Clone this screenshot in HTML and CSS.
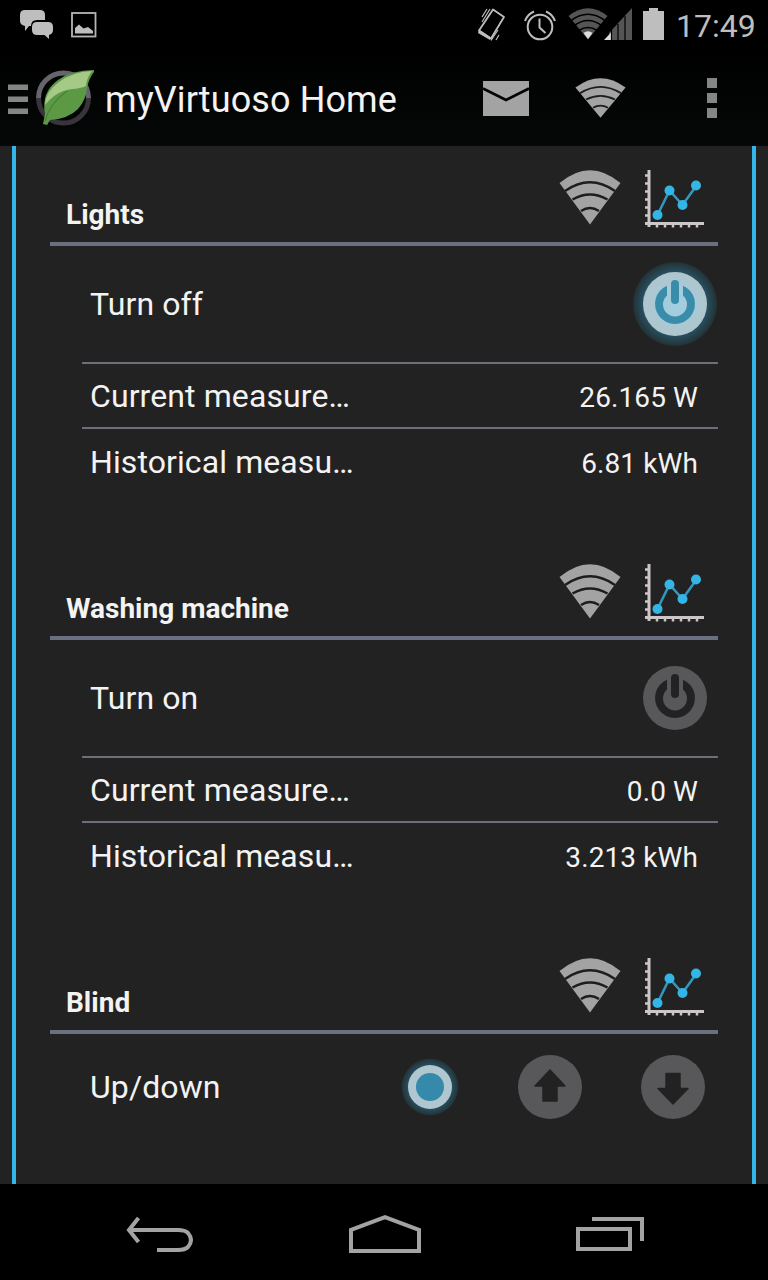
FILE: index.html
```
<!DOCTYPE html>
<html lang="en">
<head>
    <meta charset="UTF-8">
    <meta name="viewport" content="width=device-width, initial-scale=1.0">
    <title>myVirtuoso Home</title>
    <link rel="stylesheet" href="styles.css">
</head>
<body>
    <!-- Shared icons -->
    <svg class="icon-defs" width="0" height="0">
        <defs>
            <radialGradient id="glow">
                <stop offset="0.7" stop-color="#285567"/>
                <stop offset="0.86" stop-color="#25404a"/>
                <stop offset="0.96" stop-color="#233439"/>
                <stop offset="1" stop-color="#222" stop-opacity="0"/>
            </radialGradient>
            <radialGradient id="disk">
                <stop offset="0" stop-color="#9fd0e2"/>
                <stop offset="1" stop-color="#b0c5cd"/>
            </radialGradient>
        </defs>
        <symbol id="wifi" viewBox="0 0 62 55" preserveAspectRatio="none">
            <path d="M0.5 13Q31 -12.5 61.5 13L31 54.5Z" fill="#a3a3a3"/>
            <path d="M6 21Q31 3.5 56 21M13.5 29.5Q31 19.5 48.5 29.5M22 41Q31 35 40 41" fill="none" stroke="#1d1d1d" stroke-width="2.4"/>
        </symbol>
        <symbol id="chart" viewBox="0 0 60 60">
            <path d="M5 0V57M1 53.5H60" fill="none" stroke="#ccc6c8" stroke-width="3"/>
            <path d="M1 5.5H4M1 13.5H4M1 21.5H4M1 29.5H4M1 37.5H4M1 45.5H4M13 54V57.5M21 54V57.5M29 54V57.5M37 54V57.5M45 54V57.5M53 54V57.5" stroke="#ccc6c8" stroke-width="2.5"/>
            <path d="M13.5 45L25.500 20.5L38.5 35L52.5 15.5" fill="none" stroke="#3498bd" stroke-width="2.5"/>
            <g fill="#33b5e5">
                <circle cx="13.5" cy="45" r="5"/>
                <circle cx="25.5" cy="20.5" r="5"/>
                <circle cx="38.5" cy="35" r="5"/>
                <circle cx="52" cy="15.5" r="5"/>
            </g>
        </symbol>
        <symbol id="power" viewBox="0 0 86 86">
            <path d="M35 24.7A20 20 0 1 0 51 24.7V34.5A12 12 0 1 1 35 34.5Z" fill="currentColor"/>
            <path d="M43 23V39" stroke="currentColor" stroke-width="8" stroke-linecap="round"/>
        </symbol>
    </svg>

    <div class="status-bar">
        <div class="status-left">
            <svg width="34" height="31" viewBox="0 0 34 31" fill="#bebebe">
                <path d="M5 1H20Q25 1 25 6V11H17Q11 11 11 17H9L5 22V17Q0 16 0 12V6Q0 1 5 1Z"/>
                <path d="M17 13H28Q33 13 33 18V21Q33 25 29 26V30L24.5 26H17Q12 26 12 21V18Q12 13 17 13Z"/>
            </svg>
            <svg width="26" height="26" viewBox="0 0 26 26">
                <rect x="1" y="1" width="23.5" height="23.5" fill="none" stroke="#b5b5b5" stroke-width="1.8"/>
                <path d="M4 21.5V16L8 12.5L12.5 16.5L17 15L22 19V21.5Z" fill="#bebebe"/>
            </svg>
        </div>
        <div class="status-right">
            <svg class="vibrate" width="30" height="34" viewBox="0 0 30 34" fill="none" stroke="#bebebe">
                <path d="M16 1.5L27 9L14 30.5L2 22.5Z" stroke-width="1.8" stroke-linejoin="round"/>
                <path d="M2 21.5L14 29.5L13 32L1 25Z" fill="#bebebe" stroke="none"/>
                <path d="M5 9L10 1M5 14L13 1M14 32.5L21 22M19 32L22 27" stroke-width="1.2"/>
            </svg>
            <svg class="alarm" width="32" height="32" viewBox="0 0 32 32" fill="none" stroke="#bebebe">
                <circle cx="16" cy="18" r="12.3" stroke-width="2"/>
                <path d="M15.5 9.5V18.5L21.5 24M1 12Q3.5 5 10 2.5M31 12Q28.5 5 22 2.5" stroke-width="2"/>
            </svg>
            <svg class="signals" width="66" height="32" viewBox="0 0 66 32">
                <path d="M0.5 8Q20 -7.5 39.5 8L20 31.5Z" fill="#555"/>
                <path d="M3 12.5Q20 0 37 12.5M7 17Q20 8 33 17M11.5 22Q20 17 28.5 22" fill="none" stroke="#000" stroke-width="1.7"/>
                <path d="M15.5 25Q20 21.5 24.5 25L20 31Z" fill="#ddd"/>
                <path d="M41 32V25L64 0V32Z" fill="#555"/>
                <path d="M36 32L43 24.5V32Z" fill="#ddd"/>
                <path d="M43.5 22V32M50 16V32M57 8V32" stroke="#000" stroke-width="1.2"/>
            </svg>
            <svg class="battery" width="21" height="32" viewBox="0 0 21 32">
                <path d="M6 0H15V3H21V32H0V3H6Z" fill="#bebebe"/>
            </svg>
            <span class="clock">17:49</span>
        </div>
    </div>

    <div class="action-bar">
        <svg class="drawer" width="20" height="31" viewBox="0 0 20 31" fill="#858585">
            <path d="M0 0.5H20V6H0ZM0 12.5H20V18H0ZM0 24.5H20V30H0Z"/>
        </svg>
        <svg class="logo" width="60" height="58" viewBox="0 0 60 58">
            <path d="M3.5 29A25 25 0 0 1 53.5 29" fill="none" stroke="#66656b" stroke-width="5"/>
            <path d="M3.5 29A25 25 0 0 0 53.5 29" fill="none" stroke="#39343b" stroke-width="5"/>
            <path d="M59 1Q37 1 23 11Q6 23 10 45L8 55L12 56L15 51Q33 50 43 40Q51 31 52 19Q54 9 59 3Z" fill="#5c9945"/>
            <path d="M57 2Q37 3 24 13Q10 23 10 36Q22 21 38 20Q47 19 51 17Q52 8 57 2Z" fill="#a5ca88"/>
            <path d="M10 52Q15 34 32 22" fill="none" stroke="#478235" stroke-width="1.2"/>
        </svg>
        <h1 class="title">myVirtuoso Home</h1>
        <svg class="mail" width="46" height="35" viewBox="0 0 46 35">
            <path d="M0 0H46V35H0Z" fill="#a3a3a3"/>
            <path d="M0 7.5L23 19L46 7.5" fill="none" stroke="#020403" stroke-width="2.8"/>
        </svg>
        <svg class="bar-wifi" width="51" height="40"><use href="#wifi"/></svg>
        <svg class="overflow" width="10" height="40" viewBox="0 0 10 40" fill="#858585">
            <path d="M0 0H10V10H0ZM0 15H10V25H0ZM0 30H10V40H0Z"/>
        </svg>
    </div>

    <main class="devices">
        <section class="device">
            <div class="device-header">
                <h2>Lights</h2>
                <svg class="wifi" width="62" height="55"><use href="#wifi"/></svg>
                <svg class="chart" width="60" height="60"><use href="#chart"/></svg>
            </div>
            <div class="row row-switch">
                <span class="label">Turn off</span>
                <svg class="power-on" width="86" height="86" viewBox="0 0 86 86">
                    <circle cx="43" cy="43" r="43" fill="url(#glow)"/>
                    <circle cx="43" cy="43" r="32" fill="url(#disk)"/>
                    <use href="#power"/>
                </svg>
            </div>
            <div class="row">
                <span class="label">Current measure…</span>
                <span class="value">26.165 W</span>
            </div>
            <div class="row">
                <span class="label">Historical measu…</span>
                <span class="value">6.81 kWh</span>
            </div>
        </section>

        <section class="device">
            <div class="device-header">
                <h2>Washing machine</h2>
                <svg class="wifi" width="62" height="55"><use href="#wifi"/></svg>
                <svg class="chart" width="60" height="60"><use href="#chart"/></svg>
            </div>
            <div class="row row-switch">
                <span class="label">Turn on</span>
                <svg class="power-off" width="86" height="86" viewBox="0 0 86 86">
                    <circle cx="43" cy="43" r="32" fill="#58585a"/>
                    <use href="#power"/>
                </svg>
            </div>
            <div class="row">
                <span class="label">Current measure…</span>
                <span class="value">0.0 W</span>
            </div>
            <div class="row">
                <span class="label">Historical measu…</span>
                <span class="value">3.213 kWh</span>
            </div>
        </section>

        <section class="device device-blind">
            <div class="device-header">
                <h2>Blind</h2>
                <svg class="wifi" width="62" height="55"><use href="#wifi"/></svg>
                <svg class="chart" width="60" height="60"><use href="#chart"/></svg>
            </div>
            <div class="row row-blind">
                <span class="label">Up/down</span>
                <svg width="58" height="58" viewBox="0 0 58 58">
                    <circle cx="29" cy="29" r="29" fill="url(#glow)"/>
                    <circle cx="29" cy="29" r="22" fill="#b0c7cf"/>
                    <circle cx="29" cy="29" r="14" fill="#3589aa"/>
                </svg>
                <svg width="64" height="64" viewBox="0 0 64 64">
                    <circle cx="32" cy="32" r="32" fill="#58585a"/>
                    <path d="M32 15L47 31H39V46H25V31H17Z" fill="#222" stroke="#222" stroke-width="1.5" stroke-linejoin="round"/>
                </svg>
                <svg width="64" height="64" viewBox="0 0 64 64">
                    <circle cx="32" cy="32" r="32" fill="#58585a"/>
                    <path d="M32 49L47 33.5H39V18.5H25V33.5H17Z" fill="#222" stroke="#222" stroke-width="1.5" stroke-linejoin="round"/>
                </svg>
            </div>
        </section>
    </main>

    <div class="nav-bar">
        <svg width="68" height="36" viewBox="0 0 68 36" fill="none" stroke="#a3a3a3">
            <path d="M4 14H45C50 14 53 15 55 17Q61 24 55 31C53 33 50 34 45 34H24" stroke-width="4" transform="translate(7 0)"/>
            <path d="M4 14H14M12.500 2L3 14L12.500 26" stroke-width="4"/>
        </svg>
        <svg width="72" height="38" viewBox="0 0 72 38" fill="none" stroke="#a3a3a3" stroke-width="4">
            <path d="M2 36V15L36 2.200L70 15V36Z"/>
        </svg>
        <svg width="68" height="34" viewBox="0 0 68 34" fill="none" stroke="#a3a3a3" stroke-width="4">
            <path d="M2 12H54V32H2ZM16 2H66V24"/>
        </svg>
    </div>
</body>
</html>
```
FILE: styles.css
```
* { box-sizing: border-box; }
body {
    margin: 0;
    width: 768px; height: 1280px;
    display: flex; flex-direction: column;
    overflow: hidden;
    background: #222;
    color: #f3f3f3;
    font-family: Roboto, "Noto Sans", sans-serif;
}
svg { display: block; flex: none; }
.icon-defs { position: absolute; }

/* Status bar */
.status-bar {
    flex: none; height: 50px; padding: 0 12px 0 20px;
    display: flex; justify-content: space-between;
    background: #000;
}
.status-left { display: flex; gap: 17px; padding-top: 9px; }
.status-left svg:last-child { margin-top: 3px; }
.status-right { display: flex; align-items: flex-start; }
.vibrate { margin: 8px 17px 0 0; }
.alarm { margin: 9px 12px 0 0; }
.signals { margin: 8px 9px 0 0; }
.battery { margin: 8px 12px 0 0; }
.clock {
    width: 80px;
    font-size: 32px; line-height: 52px;
    color: #bebebe; white-space: nowrap;
}

/* Action bar */
.action-bar {
    flex: none; height: 96px; padding: 0 51px 0 8px;
    display: flex; align-items: center;
    background: linear-gradient(#000, #050807);
}
.drawer { margin-top: 3px; }
.logo { margin-left: 7px; }
.title {
    flex: 1; margin: 3px 0 0 10px;
    font-size: 36px; font-weight: 400; line-height: 48px;
    letter-spacing: 0.1px;
}
.mail { margin-right: 46px; }
.bar-wifi { margin-right: 81px; }

/* Device list */
.devices {
    flex: 1; min-height: 0; margin: 0 12px; padding: 0 34px;
    border: solid #33b5e5; border-width: 0 4px;
}
.device { height: 394px; }
.device-blind { height: auto; }
.device-header {
    height: 100px; padding: 24px 14px 0 16px;
    display: flex; align-items: flex-start;
    border-bottom: 4px solid #6b7080;
}
.device-header h2 {
    flex: 1; margin: 28px 0 0;
    font-size: 28px; font-weight: 700; line-height: 34px;
}
.wifi { margin-right: 23px; }
.row {
    height: 65px; margin-left: 32px; padding: 0 20px 0 8px;
    display: flex; align-items: center;
    border-bottom: 2px solid #6b7078;
}
.row:last-child { border-bottom: 0; }
.label { flex: 1; font-size: 32px; letter-spacing: 0.1px; }
.value { font-size: 28px; padding-top: 4px; letter-spacing: 0.1px; }
.row-switch { height: 118px; padding-right: 0; }
.power-on { color: #3a8cab; }
.power-off { color: #222; }
.row-blind { height: 105px; gap: 59px; padding-right: 13px; }

/* Navigation bar */
.nav-bar {
    flex: none; height: 96px; padding: 4px 124px 0 126px;
    display: flex; align-items: center; justify-content: space-between;
    background: #000;
}
```
